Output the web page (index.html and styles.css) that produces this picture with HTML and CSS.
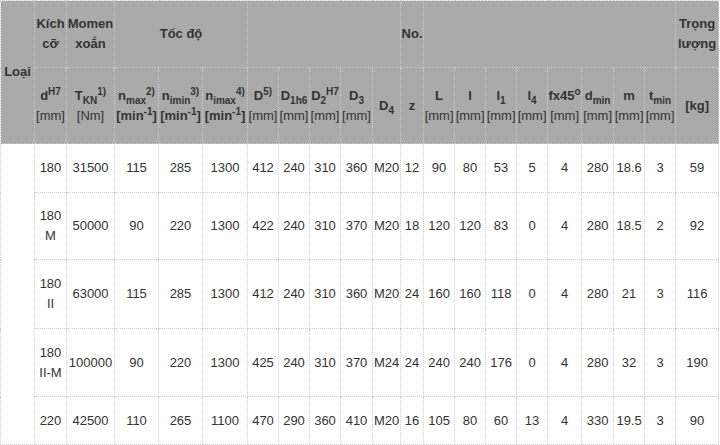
FILE: index.html
```html
<!DOCTYPE html>
<html lang="vi">
<head>
<meta charset="utf-8">
<title>Bảng thông số</title>
<link rel="stylesheet" href="styles.css">
</head>
<body>
<table class="spec">
  <colgroup>
    <col class="w34"><col class="w32"><col class="w48"><col class="w44"><col class="w44"><col class="w45">
    <col class="w31"><col class="w31"><col class="w31"><col class="w32"><col class="w28"><col class="w23">
    <col class="w31"><col class="w31"><col class="w31"><col class="w31"><col class="w34"><col class="w32">
    <col class="w31"><col class="w31"><col class="w43">
  </colgroup>
  <thead>
    <tr class="h1">
      <th rowspan="2" class="loai">Loại</th>
      <th>Kích cỡ</th>
      <th>Momen xoắn</th>
      <th colspan="3">Tốc độ</th>
      <th colspan="5"></th>
      <th>No.</th>
      <th colspan="8"></th>
      <th>Trọng lượng</th>
    </tr>
    <tr class="h2">
      <th>d<sup>H7</sup><br><span class="unit">[mm]</span></th>
      <th>T<sub>KN</sub><sup>1)</sup><br><span class="unit">[Nm]</span></th>
      <th>n<sub>max</sub><sup>2)</sup><br>[min<sup>-1</sup>]</th>
      <th>n<sub>imin</sub><sup>3)</sup><br>[min<sup>-1</sup>]</th>
      <th>n<sub>imax</sub><sup>4)</sup><br>[min<sup>-1</sup>]</th>
      <th>D<sup>5)</sup><br><span class="unit">[mm]</span></th>
      <th>D<sub>1h6</sub><br><span class="unit">[mm]</span></th>
      <th>D<sub>2</sub><sup>H7</sup><br><span class="unit">[mm]</span></th>
      <th>D<sub>3</sub><br><span class="unit">[mm]</span></th>
      <th>D<sub>4</sub></th>
      <th>z</th>
      <th>L<br><span class="unit">[mm]</span></th>
      <th>l<br><span class="unit">[mm]</span></th>
      <th>l<sub>1</sub><br><span class="unit">[mm]</span></th>
      <th>l<sub>4</sub><br><span class="unit">[mm]</span></th>
      <th>fx45<sup>o</sup><br><span class="unit">[mm]</span></th>
      <th>d<sub>min</sub><br><span class="unit">[mm]</span></th>
      <th>m<br><span class="unit">[mm]</span></th>
      <th>t<sub>min</sub><br><span class="unit">[mm]</span></th>
      <th>[kg]</th>
    </tr>
  </thead>
  <tbody>
    <tr class="b1">
      <td rowspan="5"></td>
      <td>180</td><td>31500</td><td>115</td><td>285</td><td>1300</td><td>412</td><td>240</td><td>310</td><td>360</td><td>M20</td><td>12</td><td>90</td><td>80</td><td>53</td><td>5</td><td>4</td><td>280</td><td>18.6</td><td>3</td><td>59</td>
    </tr>
    <tr class="b2">
      <td>180<br>M</td><td>50000</td><td>90</td><td>220</td><td>1300</td><td>422</td><td>240</td><td>310</td><td>370</td><td>M20</td><td>18</td><td>120</td><td>120</td><td>83</td><td>0</td><td>4</td><td>280</td><td>18.5</td><td>2</td><td>92</td>
    </tr>
    <tr class="b3">
      <td>180<br>II</td><td>63000</td><td>115</td><td>285</td><td>1300</td><td>412</td><td>240</td><td>310</td><td>360</td><td>M20</td><td>24</td><td>160</td><td>160</td><td>118</td><td>0</td><td>4</td><td>280</td><td>21</td><td>3</td><td>116</td>
    </tr>
    <tr class="b4">
      <td>180<br>II-M</td><td>100000</td><td>90</td><td>220</td><td>1300</td><td>425</td><td>240</td><td>310</td><td>370</td><td>M24</td><td>24</td><td>240</td><td>240</td><td>176</td><td>0</td><td>4</td><td>280</td><td>32</td><td>3</td><td>190</td>
    </tr>
    <tr class="b5">
      <td>220</td><td>42500</td><td>110</td><td>265</td><td>1100</td><td>470</td><td>290</td><td>360</td><td>410</td><td>M20</td><td>16</td><td>105</td><td>80</td><td>60</td><td>13</td><td>4</td><td>330</td><td>19.5</td><td>3</td><td>90</td>
    </tr>
  </tbody>
</table>
</body>
</html>
```
FILE: styles.css
```css
body {
  margin: 0;
  font-family: "Liberation Sans", Arial, sans-serif;
  font-size: 13px;
  color: #333;
  background: #fff;
}
.spec {
  border-collapse: collapse;
  table-layout: fixed;
  width: 719px;
}
.w23 { width: 23px; }
.w28 { width: 28px; }
.w31 { width: 31px; }
.w32 { width: 32px; }
.w34 { width: 34px; }
.w43 { width: 43px; }
.w44 { width: 44px; }
.w45 { width: 45px; }
.w48 { width: 48px; }
.spec th,
.spec td {
  border: 1px dotted #cfcfcf;
  padding: 0;
  text-align: center;
  vertical-align: middle;
  line-height: 20px;
  white-space: normal;
}
.spec th {
  background: #aaa;
  font-weight: bold;
  color: #333;
}
.spec td {
  white-space: nowrap;
}
.spec .unit {
  font-weight: normal;
}
.spec sup,
.spec sub {
  font-size: 10px;
  line-height: 0;
}
.h1 { height: 67px; }
.h2 { height: 76px; }
.b1 { height: 49px; }
.b2 { height: 67px; }
.b3 { height: 69px; }
.b4 { height: 68px; }
.b5 { height: 48px; }
```
